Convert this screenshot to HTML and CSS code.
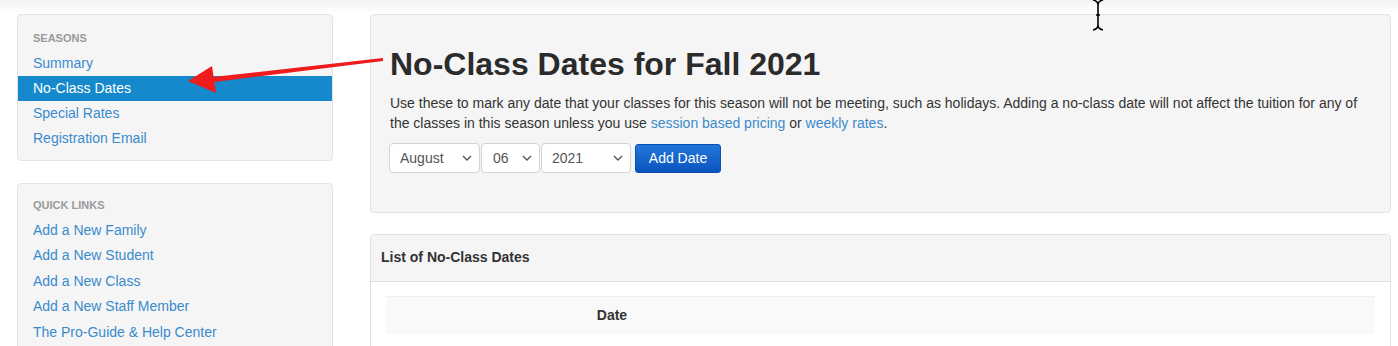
FILE: index.html
```html
<!DOCTYPE html>
<html lang="en">
<head>
<meta charset="utf-8">
<title>No-Class Dates</title>
<link rel="stylesheet" href="styles.css">
</head>
<body>
<div class="page">
  <aside class="sidebar">
    <nav class="well nav-well">
      <div class="nav-heading">SEASONS</div>
      <a class="nav-link" href="#">Summary</a>
      <a class="nav-link active" href="#">No-Class Dates</a>
      <a class="nav-link" href="#">Special Rates</a>
      <a class="nav-link" href="#">Registration Email</a>
    </nav>
    <nav class="well nav-well quick">
      <div class="nav-heading">QUICK LINKS</div>
      <a class="nav-link" href="#">Add a New Family</a>
      <a class="nav-link" href="#">Add a New Student</a>
      <a class="nav-link" href="#">Add a New Class</a>
      <a class="nav-link" href="#">Add a New Staff Member</a>
      <a class="nav-link" href="#">The Pro-Guide &amp; Help Center</a>
    </nav>
  </aside>
  <main class="main">
    <section class="well intro">
      <h1 class="title">No-Class Dates for Fall 2021</h1>
      <p class="desc">Use these to mark any date that your classes for this season will not be meeting, such as holidays. Adding a no-class date will not affect the tuition for any of the classes in this season unless you use <a href="#">session based pricing</a> or <a href="#">weekly rates</a>.</p>
      <form class="date-form">
        <label class="sel sel-month">
          <select><option>August</option></select>
          <svg class="chev" width="10" height="6" viewBox="0 0 10 6"><path d="M1 1l4 4 4-4" fill="none" stroke="#555" stroke-width="1.4"/></svg>
        </label>
        <label class="sel sel-day">
          <select><option>06</option></select>
          <svg class="chev" width="10" height="6" viewBox="0 0 10 6"><path d="M1 1l4 4 4-4" fill="none" stroke="#555" stroke-width="1.4"/></svg>
        </label>
        <label class="sel sel-year">
          <select><option>2021</option></select>
          <svg class="chev" width="10" height="6" viewBox="0 0 10 6"><path d="M1 1l4 4 4-4" fill="none" stroke="#555" stroke-width="1.4"/></svg>
        </label>
        <button type="button" class="btn">Add Date</button>
      </form>
    </section>
    <section class="panel">
      <div class="panel-head">List of No-Class Dates</div>
      <div class="panel-body">
        <table class="dates">
          <thead><tr><th class="col-date">Date</th><th></th></tr></thead>
        </table>
      </div>
    </section>
  </main>
</div>
<svg class="overlay-arrow" width="400" height="110" viewBox="0 0 400 110">
  <polygon points="383,58 383,61 206,83 204,78" fill="#ee1c1c"/>
  <polygon points="188,81 212,66 216,93" fill="#ee1c1c"/>
</svg>
<svg class="cursor" width="16" height="32" viewBox="0 0 16 32">
  <path d="M3 1 Q8 2 8 6 Q8 2 13 1 M8 6 V26 M6 16 H10 M3 31 Q8 30 8 26 Q8 30 13 31" fill="none" stroke="#000" stroke-width="1.6"/>
</svg>
</body>
</html>
```
FILE: styles.css
```css
* { box-sizing: border-box; }
html, body { margin: 0; padding: 0; }
body {
  font-family: "Liberation Sans", Arial, sans-serif;
  font-size: 14px;
  color: #333;
  background: linear-gradient(#f3f3f3, #ffffff 13px) no-repeat;
  background-color: #fff;
  width: 1398px;
  height: 346px;
  overflow: hidden;
  position: relative;
}
a { color: #3a8bcd; text-decoration: none; }
.page {
  display: grid;
  grid-template-columns: 316px 1fr;
  column-gap: 37px;
  padding: 14px 7px 0 17px;
}
.well {
  background: #f5f5f5;
  border: 1px solid #e3e3e3;
  border-radius: 4px;
}
.sidebar { display: flex; flex-direction: column; gap: 22px; }
.nav-well { padding: 14px 0 9px; display: flex; flex-direction: column; }
.quick { padding-top: 12px; height: 200px; }
.nav-heading {
  font-size: 11px;
  font-weight: bold;
  color: #999;
  line-height: 18px;
  padding-left: 15px;
  margin-bottom: 4px;
}
.quick .nav-heading { margin-bottom: 4px; }
.nav-link {
  display: block;
  line-height: 25px;
  height: 25px;
  padding-left: 15px;
  font-size: 14px;
}
.quick .nav-link { height: 25.4px; line-height: 25.4px; }
.nav-link.active { background: #1589cc; color: #fff; }
.main { display: flex; flex-direction: column; gap: 21px; }
.intro { padding: 31px 20px 39px 19px; }
.title {
  margin: 0 0 10px;
  font-size: 32px;
  line-height: 37px;
  font-weight: bold;
  color: #2b2b2b;
}
.desc { margin: 0 0 10px; line-height: 20px; font-size: 14px; color: #333; }
.date-form { display: flex; align-items: center; gap: 1px; margin-left: -1px; }
.sel { position: relative; display: block; }
.sel select {
  appearance: none;
  -webkit-appearance: none;
  height: 30px;
  border: 1px solid #d4d4d4;
  border-radius: 4px;
  background: #fff;
  font-family: "Liberation Sans", Arial, sans-serif;
  font-size: 14px;
  color: #555;
  padding: 0 0 0 10px;
  display: block;
}
.sel-month select { width: 91px; }
.sel-day select { width: 59px; padding-left: 11px; }
.sel-year select { width: 90px; }
.chev { position: absolute; right: 8px; top: 12px; pointer-events: none; }
.btn {
  margin-left: 3px;
  width: 86px;
  height: 29px;
  border: 1px solid #0b4fae;
  border-radius: 3px;
  background: linear-gradient(#2377d9, #0a54c0);
  color: #fff;
  font-family: "Liberation Sans", Arial, sans-serif;
  font-size: 14px;
  padding: 0;
}
.panel {
  border: 1px solid #e0e0e0;
  border-radius: 4px;
  background: #fff;
  height: 130px;
}
.panel-head {
  background: #f5f5f5;
  border-bottom: 1px solid #dddddd;
  border-radius: 4px 4px 0 0;
  height: 47px;
  line-height: 45px;
  padding-left: 10px;
  font-weight: bold;
  font-size: 14px;
  color: #333;
}
.panel-body { padding: 14px 15px; }
.dates { width: 100%; border-collapse: collapse; }
.dates th {
  background: #f9f9f9;
  border-top: 1px solid #f0f0f0;
  height: 37px;
  font-weight: bold;
  font-size: 14px;
  text-align: center;
  color: #333;
}
.dates .col-date { width: 452px; }
.overlay-arrow { position: absolute; left: 0; top: 0; }
.cursor { position: absolute; left: 1090px; top: -1px; }
```
